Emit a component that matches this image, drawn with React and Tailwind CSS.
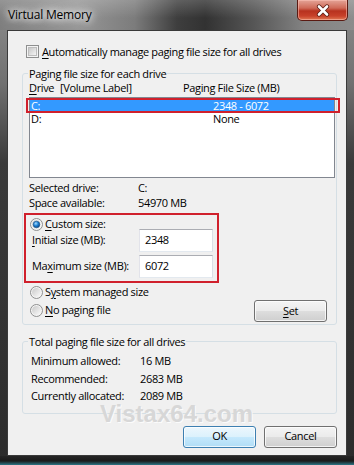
import React from 'react';

const Mn = ({ children }) => <span className="underline decoration-1 underline-offset-[2px]">{children}</span>;

function CheckBox() {
  return (
    <span className="flex h-[13px] w-[13px] shrink-0 items-center justify-center border border-[#8e8f8f] bg-[#f4f4f4]">
      <span className="h-[9px] w-[9px] border border-[#bdbdbd] bg-[linear-gradient(135deg,#c8c8c8,#f4f4f4)]" />
    </span>
  );
}

function Radio({ checked }) {
  return (
    <svg width="13" height="13" viewBox="0 0 13 13" className="shrink-0">
      <defs>
        <linearGradient id="rbg" x1="0" y1="0" x2="1" y2="1">
          <stop offset="0" stopColor="#c9c9c9" />
          <stop offset="1" stopColor="#fbfbfb" />
        </linearGradient>
        <radialGradient id="rdot" cx="0.4" cy="0.35" r="0.7">
          <stop offset="0" stopColor="#a8dcff" />
          <stop offset="0.5" stopColor="#1c7fd1" />
          <stop offset="1" stopColor="#0a3f7a" />
        </radialGradient>
      </defs>
      <circle cx="6.5" cy="6.5" r="6" fill="#f4f4f4" stroke="#8e8f8f" />
      <circle cx="6.5" cy="6.5" r="4.5" fill="url(#rbg)" />
      {checked && <circle cx="6.5" cy="6.5" r="3.3" fill="url(#rdot)" stroke="#1b4f86" strokeWidth="0.6" />}
    </svg>
  );
}

function Button({ children, primary, className = '' }) {
  const look = primary
    ? 'border-[#3c7fb1] bg-[linear-gradient(180deg,#ecf7fd_0%,#dcf1fc_48%,#c4e8fc_52%,#b0ddf6_100%)]'
    : 'border-[#707070] bg-[linear-gradient(180deg,#f4f4f4_0%,#ebebeb_48%,#dddddd_52%,#cfcfcf_100%)]';
  return (
    <div className={`flex h-[22px] w-[73px] items-center justify-center rounded-[3px] border ${look} shadow-[inset_0_0_0_1px_rgba(255,255,255,0.75)] ${className}`}>
      {children}
    </div>
  );
}

function Group({ label, className = '', children }) {
  return (
    <div className={`relative rounded-[3px] border border-[#d5dfe5] ${className}`}>
      <span className="absolute -top-[8px] left-[5px] bg-[#f0f0f0] px-[1px] leading-[15px]">{label}</span>
      {children}
    </div>
  );
}

function TextBox({ value }) {
  return (
    <div className="flex h-[23px] w-[74px] items-center border border-[#abadb3] border-l-[#e2e3ea] border-r-[#dbdfe6] border-b-[#e3e9ef] bg-white pl-[5px]">
      {value}
    </div>
  );
}

export default function App() {
  return (
    <div className="flex h-[465px] w-[354px] flex-col bg-[linear-gradient(180deg,#8d8d8d_0%,#707070_18%,#3a3a3a_35%,#2c2c2c_100%)] font-['Open_Sans','Noto_Sans',sans-serif] text-[11px] tracking-[-0.35px] text-black">
      {/* title bar */}
      <div className="flex h-[30px] shrink-0 bg-[linear-gradient(90deg,#7e7e7e_0%,#969696_22%,#7c7c7c_38%,#3e3e3e_50%,#323232_58%,#575757_72%,#838383_86%,#8c8c8c_100%)]">
        <div className="flex flex-1 bg-[linear-gradient(180deg,rgba(255,255,255,0.18)_0%,rgba(255,255,255,0)_60%)]">
          <span className="ml-[8px] mt-[7px] h-[16px] text-[12px] leading-[16px] tracking-[-0.2px] [text-shadow:0_0_6px_#fff,0_0_10px_#fff,0_0_14px_rgba(255,255,255,0.8)]">
            Virtual Memory
          </span>
          <div className="ml-auto mr-[6px] flex h-[21px] w-[51px] items-center justify-center rounded-b-[5px] border border-t-0 border-[#5a1a12] bg-[linear-gradient(180deg,#e4a497_0%,#cf6a58_40%,#b7321f_55%,#c8412a_80%,#e07a55_100%)] shadow-[inset_0_0_0_1px_rgba(255,200,190,0.5)]">
            <svg width="16" height="13" viewBox="0 0 16 13">
              <path d="M4 2.5 L12 10.5 M12 2.5 L4 10.5" stroke="#5a1d14" strokeWidth="4.2" strokeLinecap="round" />
              <path d="M4 2.5 L12 10.5 M12 2.5 L4 10.5" stroke="#ffffff" strokeWidth="2.6" strokeLinecap="round" />
            </svg>
          </div>
        </div>
      </div>

      {/* client area */}
      <div className="relative ml-[7px] flex h-[426px] w-[340px] shrink-0 flex-col border border-[#3a3a3a] bg-[#f0f0f0]">
        <div className="mt-[14px] flex h-[13px] items-center gap-[3px] pl-[18px]">
          <CheckBox />
          <span className="leading-[13px]">
            <Mn>A</Mn>utomatically manage paging file size for all drives
          </span>
        </div>

        <Group label="Paging file size for each drive" className="ml-[14px] mt-[15px] w-[315px] pb-[2px]">
          <div className="mt-[6px] grid grid-cols-[31px_123px_1fr] pl-[6px] leading-[15px]">
            <span><Mn>D</Mn>rive</span>
            <span>[Volume Label]</span>
            <span>Paging File Size (MB)</span>
          </div>
          <div className="ml-[6px] mt-[2px] h-[81px] w-[306px] border border-[#828790] bg-white">
            <div className="mt-[1px] grid h-[13px] grid-cols-[182px_1fr] items-center bg-[#3399ff] pl-[1px] leading-[12px] text-white">
              <span>C:</span>
              <span>2348 - 6072</span>
            </div>
            <div className="grid h-[13px] grid-cols-[182px_1fr] items-center pl-[1px] leading-[12px]">
              <span>D:</span>
              <span>None</span>
            </div>
          </div>
          <div className="absolute left-[3px] top-[24px] h-[15px] w-[314px] border-2 border-[#d0202c]" />

          <div className="mt-[2px] grid grid-cols-[109px_1fr] pl-[6px] leading-[15px]">
            <span>Selected drive:</span>
            <span>C:</span>
            <span>Space available:</span>
            <span>54970 MB</span>
          </div>

          <div className="ml-[1px] mt-[3px] flex w-[195px] flex-col border-2 border-[#d0202c] pb-[3px]">
            <div className="mt-[2px] flex h-[14px] items-center gap-[2px] pl-[4px]">
              <Radio checked />
              <span><Mn>C</Mn>ustom size:</span>
            </div>
            <div className="-mt-[2px] flex items-center pl-[6px]">
              <span className="w-[107px]"><Mn>I</Mn>nitial size (MB):</span>
              <TextBox value="2348" />
            </div>
            <div className="mt-[3px] flex items-center pl-[6px]">
              <span className="w-[107px]">Ma<Mn>x</Mn>imum size (MB):</span>
              <TextBox value="6072" />
            </div>
          </div>

          <div className="mt-[2px] flex justify-between">
            <div className="flex flex-col gap-[4px] pl-[7px]">
              <div className="flex h-[14px] items-center gap-[2px]">
                <Radio />
                <span>S<Mn>y</Mn>stem managed size</span>
              </div>
              <div className="flex h-[14px] items-center gap-[2px]">
                <Radio />
                <span><Mn>N</Mn>o paging file</span>
              </div>
            </div>
            <Button className="mr-[9px] mt-[15px] h-[21px]">
              <span><Mn>S</Mn>et</span>
            </Button>
          </div>
        </Group>

        <Group label="Total paging file size for all drives" className="ml-[14px] mt-[16px] w-[315px] pb-[8px]">
          <div className="mt-[10px] grid grid-cols-[109px_1fr] pl-[8px] leading-[17.5px]">
            <span>Minimum allowed:</span>
            <span>16 MB</span>
            <span>Recommended:</span>
            <span>2683 MB</span>
            <span>Currently allocated:</span>
            <span>2089 MB</span>
          </div>
        </Group>

        <div className="mr-[9px] mt-[12px] flex justify-end gap-[8px]">
          <Button primary>OK</Button>
          <Button>Cancel</Button>
        </div>

        <span className="absolute left-[92px] top-[371px] font-['Liberation_Sans',sans-serif] text-[24px] font-bold leading-none tracking-normal text-[#d7d7d7] [text-shadow:1px_1px_0_rgba(255,255,255,0.8)]">
          Vistax64.com
        </span>
      </div>

      <div className="h-[9px] shrink-0 bg-[linear-gradient(180deg,#262626_0%,#1b1b1b_55%,#2d7686_100%)]" />
    </div>
  );
}
